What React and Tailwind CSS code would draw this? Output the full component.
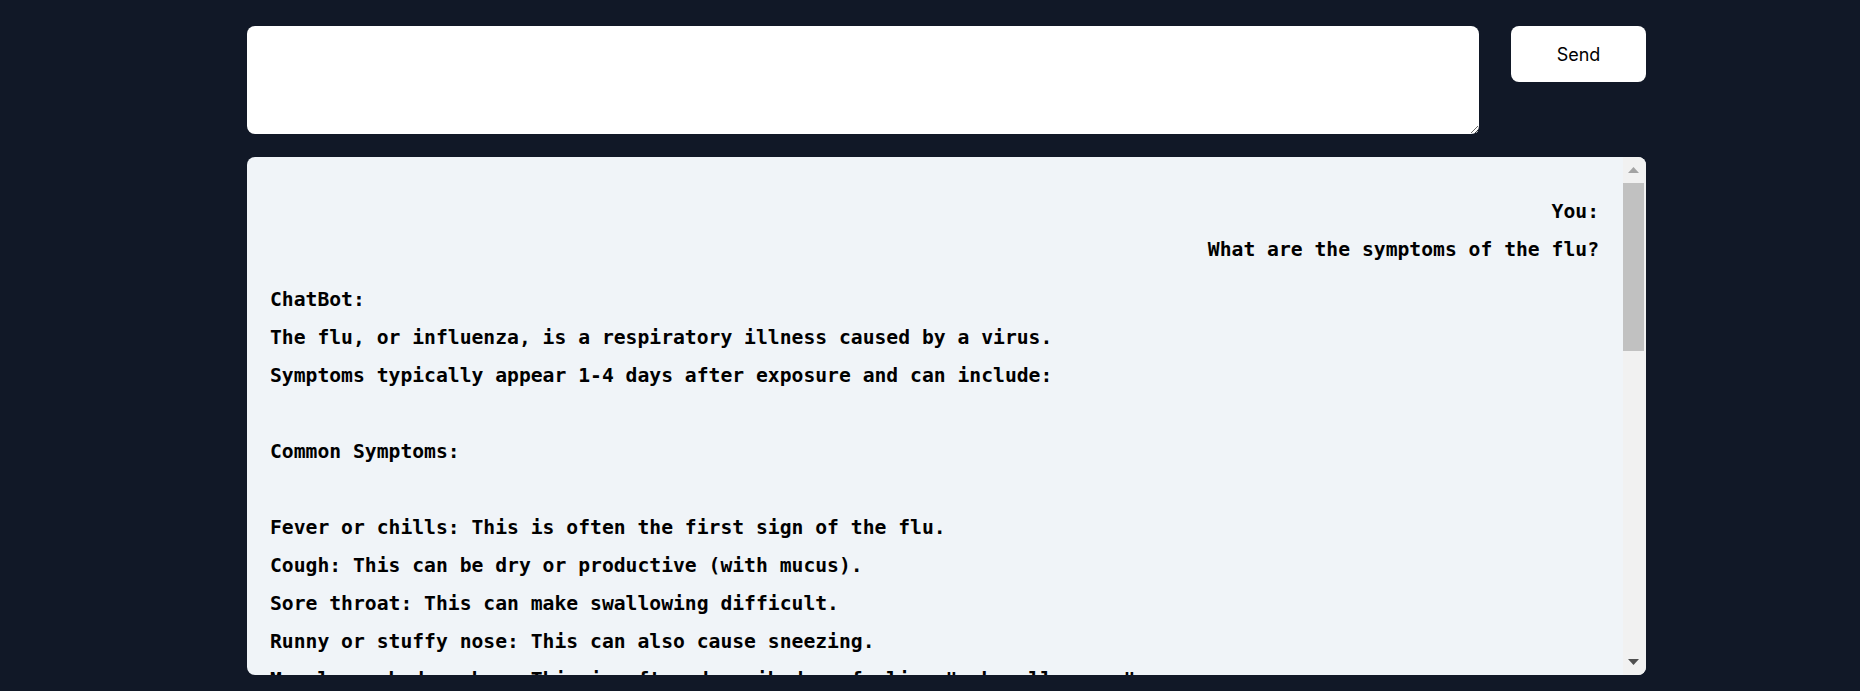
import { useState } from "react";

const messages = [
  { from: "user", text: "What are the symptoms of the flu?" },
  {
    from: "bot",
    text: [
      "The flu, or influenza, is a respiratory illness caused by a virus.",
      "Symptoms typically appear 1-4 days after exposure and can include:",
      "",
      "Common Symptoms:",
      "",
      "Fever or chills: This is often the first sign of the flu.",
      "Cough: This can be dry or productive (with mucus).",
      "Sore throat: This can make swallowing difficult.",
      "Runny or stuffy nose: This can also cause sneezing.",
      "Muscle or body aches: This is often described as feeling \"achy all over.\"",
      "Fatigue: Feeling very tired and weak is common.",
      "Headache: Often accompanies the fever.",
    ].join("\n"),
  },
];

export default function App() {
  const [input, setInput] = useState("");

  return (
    <div className="min-h-[691px] bg-[#111827] pl-[247px] pt-[26px] font-['Inter',sans-serif]">
      <div className="w-[1399px]">
        {/* Input row */}
        <div className="flex items-start gap-8">
          <textarea
            value={input}
            onChange={(e) => setInput(e.target.value)}
            className="h-[108px] flex-1 rounded-lg bg-white p-3 text-black outline-none"
          />
          <button className="h-[56px] w-[135px] rounded-lg bg-white text-[18px] text-black">
            Send
          </button>
        </div>

        {/* Chat window */}
        <div className="mt-[23px] flex h-[518px] overflow-hidden rounded-lg bg-[#f0f4f8]">
          <div className="flex-1 overflow-hidden px-6 pt-[24px] pl-[23px] font-['DejaVu_Sans_Mono',monospace] text-[19.7px] leading-[38px] font-bold text-black">
            {messages.map((m, i) =>
              m.from === "user" ? (
                <div key={i} className="my-3 text-right">
                  <div>You:</div>
                  <div className="whitespace-pre-wrap">{m.text}</div>
                </div>
              ) : (
                <div key={i} className="my-3">
                  <div>ChatBot:</div>
                  <div className="whitespace-pre-wrap">{m.text}</div>
                </div>
              )
            )}
          </div>

          {/* Scrollbar */}
          <div className="flex w-[23px] flex-col bg-[#f1f1f1] pr-[2px]">
            <div className="flex h-[26px] items-center justify-center">
              <svg width="11" height="6" viewBox="0 0 11 6">
                <path d="M5.5 0 L11 6 L0 6 Z" fill="#a3a3a3" />
              </svg>
            </div>
            <div className="h-[168px] bg-[#c1c1c1]" />
            <div className="flex-1" />
            <div className="flex h-[26px] items-center justify-center">
              <svg width="11" height="6" viewBox="0 0 11 6">
                <path d="M0 0 L11 0 L5.5 6 Z" fill="#505050" />
              </svg>
            </div>
          </div>
        </div>
      </div>
    </div>
  );
}
